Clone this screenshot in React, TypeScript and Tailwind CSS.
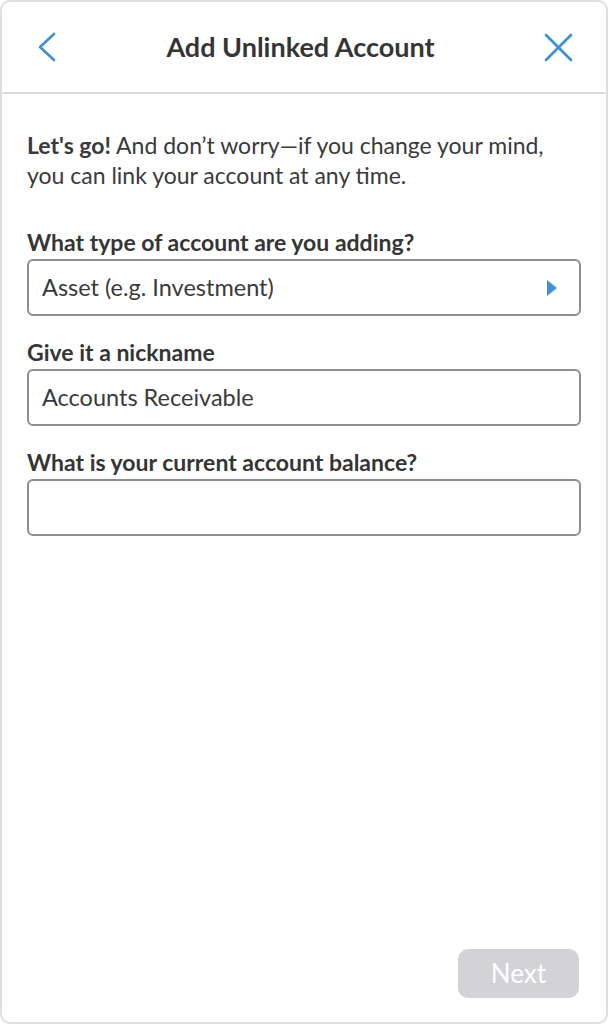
import React from 'react';

function BackIcon() {
  return (
    <svg width="20" height="30" viewBox="0 0 20 30" fill="none" stroke="#3f8fd8" strokeWidth="2.6" strokeLinecap="round" strokeLinejoin="round">
      <polyline points="17,2 3,15 17,28" />
    </svg>
  );
}

function CloseIcon() {
  return (
    <svg width="29" height="29" viewBox="0 0 29 29" fill="none" stroke="#3f8fd8" strokeWidth="2.6" strokeLinecap="round">
      <line x1="2" y1="2" x2="27" y2="27" />
      <line x1="27" y1="2" x2="2" y2="27" />
    </svg>
  );
}

function Field({ label, value, arrow, className = '' }: { label: string; value?: string; arrow?: boolean; className?: string }) {
  return (
    <div className={className}>
      <div className="text-[23px] leading-[30px] font-bold text-[#353535]">{label}</div>
      <div className="mt-[2px] h-[57px] border-2 border-[#8e8e8e] rounded-[6px] flex items-center justify-between pl-[13px] pr-[22px]">
        <span className="text-[23.5px] text-[#3a3a3a]">{value}</span>
        {arrow && (
          <svg width="10" height="16" viewBox="0 0 10 16">
            <polygon points="0,0 10,8 0,16" fill="#3f8fd8" />
          </svg>
        )}
      </div>
    </div>
  );
}

export default function App() {
  return (
    <div className="w-[608px] h-[1024px] bg-white">
      <div className="w-full h-full border-2 border-[#dedede] rounded-[10px] flex flex-col font-['Lato',sans-serif] overflow-hidden">
        <header className="h-[92px] shrink-0 border-b-2 border-[#dcdcdc] flex items-center justify-between pl-[35px] pr-[33px]">
          <BackIcon />
          <h1 className="text-[27px] font-bold text-[#353535]">Add Unlinked Account</h1>
          <CloseIcon />
        </header>
        <main className="flex-1 flex flex-col px-[25px] pt-[36px]">
          <p className="text-[23px] leading-[30px] text-[#3a3a3a]">
            <span className="font-bold">Let's go!</span> And don’t worry—if you change your mind, you can link your account at any time.
          </p>
          <Field className="mt-[37px]" label="What type of account are you adding?" value="Asset (e.g. Investment)" arrow />
          <Field className="mt-[21px]" label="Give it a nickname" value="Accounts Receivable" />
          <Field className="mt-[21px]" label="What is your current account balance?" />
          <div className="flex-1" />
          <div className="flex justify-end pb-[24px] pr-[2px]">
            <button className="w-[121px] h-[49px] rounded-[10px] bg-[#d2d2d7] text-white text-[26px]">Next</button>
          </div>
        </main>
      </div>
    </div>
  );
}
